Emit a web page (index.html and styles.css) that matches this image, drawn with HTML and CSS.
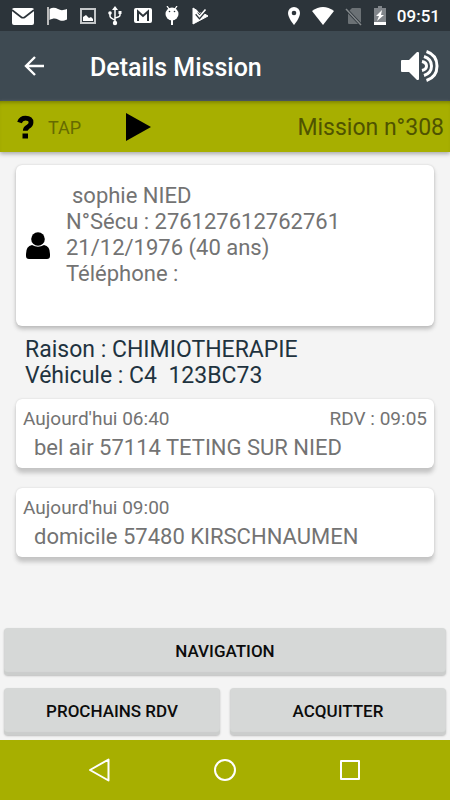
FILE: index.html
```html
<!DOCTYPE html>
<html lang="fr">
<head>
<meta charset="utf-8">
<meta name="viewport" content="width=device-width, initial-scale=1">
<title>Details Mission</title>
<link rel="stylesheet" href="styles.css">
</head>
<body>
<div class="screen">
  <div class="status">
    <div class="status-icons">
      <svg width="24" height="20" viewBox="0 0 24 20"><rect x="1" y="2" width="22" height="17" rx="2" fill="#fff"/><path d="M1 4l9 7q2 1.500 4 0l9-7" fill="none" stroke="#2c343a" stroke-width="1.600"/></svg>
      <svg width="22" height="20" viewBox="0 0 22 20"><path d="M2 1v18" stroke="#bbb" stroke-width="2"/><path d="M3.500 3c3-2 6-1.500 8.500 0s5 1.500 9 0v10.500c-4 2-6.500 1.500-9 0s-5-1.500-8.500.5z" fill="#fff"/></svg>
      <svg width="18" height="20" viewBox="0 0 18 20"><rect x="2" y="3" width="14" height="14" fill="#2c343a" stroke="#c4c7c9" stroke-width="2"/><path d="M4 15v-4l3-2 3 3 2-1 2 2v2z" fill="#fff"/></svg>
      <svg width="14" height="20" viewBox="0 0 14 20" fill="none" stroke="#fff" stroke-width="1.500"><path d="M7 3v14M2 8v2q0 2 5 4M12 7v2q0 2-5 3"/><path d="M7 0l3 4H4z" fill="#fff" stroke="none"/><circle cx="7" cy="17" r="2.200" fill="#fff" stroke="none"/><circle cx="2" cy="7" r="1.800" fill="#fff" stroke="none"/><path d="M10.500 5h3v3h-3z" fill="#fff" stroke="none"/></svg>
      <svg width="20" height="20" viewBox="0 0 20 20"><rect x="1" y="2" width="18" height="15" rx="2" fill="#fff"/><path d="M5 15V5.500l5 4.500 5-4.500V15" fill="none" stroke="#2c343a" stroke-width="2"/></svg>
      <svg width="16" height="20" viewBox="0 0 16 20"><path d="M3 0l2 3M13 0l-2 3" stroke="#fff" stroke-width="1.300"/><circle cx="8" cy="8" r="6.500" fill="#fff"/><path d="M8 13v6" stroke="#fff" stroke-width="2"/><circle cx="5.500" cy="5.500" r=".8" fill="#2c343a"/><circle cx="10.500" cy="5.500" r=".8" fill="#2c343a"/></svg>
      <svg width="18" height="20" viewBox="0 0 18 20"><path d="M2 2l4 2.500 2 3 3-1 6 3.500L2 18z" fill="#fff" stroke="#fff" stroke-linejoin="round"/><path d="M5.500 7.500l3 3.500 6-7" fill="none" stroke="#2c343a" stroke-width="3.500"/><path d="M5.500 7l3 3.500 6-7" fill="none" stroke="#fff" stroke-width="1.600"/></svg>
    </div>
    <div class="status-info">
      <svg width="14" height="20" viewBox="0 0 14 20"><path d="M7 1a6 6 0 0 0-6 6c0 5 6 12 6 12s6-7 6-12a6 6 0 0 0-6-6z" fill="#fff"/><circle cx="7" cy="7" r="2.300" fill="#2c343a"/></svg>
      <svg width="22" height="20" viewBox="0 0 22 20"><path d="M0 5q11-8 22 0L11 19z" fill="#fff"/></svg>
      <svg width="18" height="20" viewBox="0 0 18 20"><path d="M7 2h8q1 0 1 1v14q0 1-1 1H4q-1 0-1-1V6z" fill="#6b7175"/><path d="M1 3l15 16" stroke="#2c343a" stroke-width="3"/><path d="M1 3l15 16" stroke="#858a8d" stroke-width="1.500"/></svg>
      <svg width="12" height="20" viewBox="0 0 12 20"><path d="M4 0h4v2h4v17H0V2h4z" fill="#80858a"/><path d="M0 16h12v3H0zM8 4L2 10h3l-2 5 7-6H7z" fill="#fff"/></svg>
      <time class="clock">09:51</time>
    </div>
  </div>

  <header class="appbar">
    <button class="icon-button" aria-label="Retour"><svg width="22" height="20" viewBox="0 0 22 20"><path d="M20 10H2M11 1l-9 9 9 9" fill="none" stroke="#fff" stroke-width="2.400"/></svg></button>
    <h1 class="title">Details Mission</h1>
    <button class="icon-button" aria-label="Son"><svg width="40" height="34" viewBox="0 0 40 34"><path d="M2 11h7l8-8h1q1 0 1 1v26q0 1-1 1h-1l-8-8H2q-1 0-1-1V12q0-1 1-1z" fill="#fff"/><path d="M22 12.500q4.500 1 4.500 4.500T22 21.500M24 7.500q7.500 2.500 7.500 9.500T24 26.500M26.500 2.500Q37 6 37 17T26.500 31.500" fill="none" stroke="#fff" stroke-width="3"/></svg></button>
  </header>

  <div class="mission">
    <svg width="18" height="24" viewBox="0 0 18 24"><path d="M2.500 7.500Q4 3.200 8.500 3.200q5.500 0 5.500 4.300 0 2.500-3 4.300-2.700 1.500-2.700 4" fill="none" stroke="#000" stroke-width="4.800"/><path d="M5.500 18.500h5.500v5H5.500z"/></svg>
    <span class="tap">TAP</span>
    <button class="icon-button play" aria-label="Lire"><svg width="26" height="28" viewBox="0 0 26 28"><path d="M1 0l25 14L1 28z"/></svg></button>
    <span class="mission-number">Mission n°308</span>
  </div>

  <main class="content">
    <section class="card patient">
      <svg width="26" height="28" viewBox="0 0 26 28"><circle cx="13" cy="7" r="6.800"/><path d="M7 13q6 3.500 12 0 6 1 6 9v2q0 3-3 3H4q-3 0-3-3v-2q0-8 6-9z"/></svg>
      <div class="patient-text">
        <div class="name">sophie NIED</div>
        <div>N°Sécu : 276127612762761</div>
        <div>21/12/1976 (40 ans)</div>
        <div>Téléphone :</div>
      </div>
    </section>
    <section class="reason">
      <div>Raison : CHIMIOTHERAPIE</div>
      <div class="vehicle">Véhicule : C4  123BC73</div>
    </section>
    <section class="card stop">
      <div class="times"><span>Aujourd'hui 06:40</span><span>RDV : 09:05</span></div>
      <div class="place">bel air 57114 TETING SUR NIED</div>
    </section>
    <section class="card stop">
      <div class="times"><span>Aujourd'hui 09:00</span></div>
      <div class="place">domicile 57480 KIRSCHNAUMEN</div>
    </section>
  </main>

  <div class="actions">
    <button class="action wide">NAVIGATION</button>
    <button class="action">PROCHAINS RDV</button>
    <button class="action">ACQUITTER</button>
  </div>

  <nav class="navbar">
    <button class="icon-button" aria-label="Précédent"><svg width="24" height="26" viewBox="0 0 24 26"><path d="M20.500 2.500v21L2 13z"/></svg></button>
    <button class="icon-button" aria-label="Accueil"><svg width="24" height="26" viewBox="0 0 24 26"><circle cx="12" cy="13" r="10"/></svg></button>
    <button class="icon-button" aria-label="Applications"><svg width="24" height="26" viewBox="0 0 24 26"><rect x="3" y="4" width="18" height="18"/></svg></button>
  </nav>
</div>
</body>
</html>
```
FILE: styles.css
```css
* {
  box-sizing: border-box;
}

body {
  margin: 0;
  background: #f4f4f4;
  color: #737373;
  font-family: Roboto, sans-serif;
  font-size: 22px;
  line-height: 26px;
}

svg {
  display: block;
  flex: none;
}

button {
  margin: 0;
  border: 0;
  font-family: inherit;
  cursor: pointer;
}

.icon-button {
  padding: 0;
  background: none;
}

.screen {
  display: flex;
  flex-direction: column;
  min-height: 100vh;
}

.status {
  display: flex;
  justify-content: space-between;
  align-items: center;
  height: 31px;
  padding: 0 10px 0 11px;
  background: #2c343a;
}

.status-icons {
  display: flex;
  gap: 11px;
}

.status-info {
  display: flex;
  align-items: center;
  gap: 11px;
}

.clock {
  color: #fff;
  font-size: 17px;
  font-weight: 500;
}

.appbar {
  display: flex;
  align-items: center;
  height: 70px;
  padding: 0 10px 0 24px;
  background: #3e4a52;
}

.title {
  flex: 1;
  margin: 4px 0 0 44px;
  color: #fff;
  font-size: 25px;
  font-weight: 500;
}

.mission {
  display: flex;
  align-items: center;
  height: 51px;
  padding: 0 6px 0 17px;
  background: #a7af00;
  color: #4f5300;
  box-shadow: inset 0 4px 4px -3px #6f7500, 0 2px 4px #aaa;
}

.tap {
  margin-left: 13px;
  padding-top: 2px;
  color: #666b00;
  font-size: 18px;
}

.play {
  margin-left: 44px;
}

.mission-number {
  margin-left: auto;
  padding-top: 3px;
  font-size: 23px;
}

.content {
  flex: 1;
  padding: 13px 16px;
}

.card {
  border-radius: 6px;
  background: #fff;
  box-shadow: 0 3px 4px #bbb, 0 0 2px #ccc;
}

.patient {
  display: flex;
  align-items: center;
  gap: 15px;
  min-height: 161px;
  padding: 0 9px;
}

.patient-text {
  margin-bottom: 22px;
}

.name {
  padding-left: 6px;
}

.reason {
  padding: 11px 9px 10px;
  color: #1f333f;
  font-size: 23px;
}

.vehicle {
  white-space: pre;
}

.stop {
  padding: 7px 7px 6px;
  box-shadow: 0 5px 4px #c4c4c4, 0 0 2px #ccc;
}

.stop + .stop {
  margin-top: 20px;
}

.times {
  display: flex;
  justify-content: space-between;
  font-size: 19px;
}

.place {
  padding: 3px 11px 1px;
}

.actions {
  display: grid;
  grid-template-columns: 1fr 1fr;
  gap: 13px 10px;
  padding: 0 4px 5px;
}

.action {
  height: 47px;
  padding: 0 6px 2px;
  border-radius: 4px;
  background: #d6d8d7;
  color: #0c0c0c;
  font-size: 17px;
  font-weight: 500;
  box-shadow: inset 0 -3px 1px #cbcdcc, 0 1px 2px #bbb;
}

.wide {
  grid-column: 1 / -1;
}

.navbar {
  display: flex;
  justify-content: center;
  align-items: center;
  gap: 101px;
  height: 60px;
  background: #a7af00;
}

.navbar svg {
  fill: none;
  stroke: #fff;
  stroke-width: 2;
  stroke-linejoin: round;
}
```
